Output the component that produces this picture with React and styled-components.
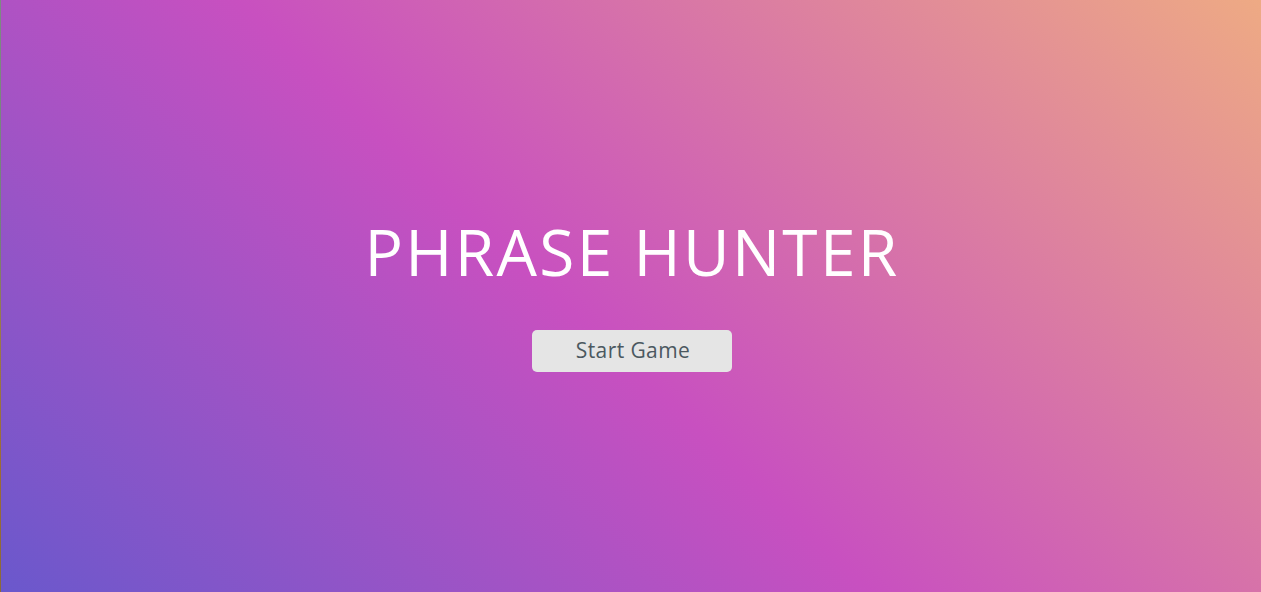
import React from "react";
import styled, { createGlobalStyle } from "styled-components";

const GlobalStyle = createGlobalStyle`
  html, body {
    margin: 0;
    padding: 0;
    height: 100%;
  }
  body {
    font-family: "Open Sans", "Liberation Sans", sans-serif;
  }
`;

const Screen = styled.main`
  box-sizing: border-box;
  height: 100vh;
  width: 100%;
  padding-left: 2px;
  display: flex;
  flex-direction: column;
  align-items: center;
  justify-content: center;
  gap: 46px;
  background: linear-gradient(43deg, #6a58cc 0%, #c850c0 46%, #eeaa84 100%);
  border-left: 1px solid;
  border-image: linear-gradient(to bottom, #7d8a84 0%, #74807c 40%, #9a7a4a 55%, #9c6a36 80%, #8a6a3a 100%) 1;
`;

const Title = styled.h1`
  margin: 0;
  font-family: "Open Sans", "Liberation Sans", sans-serif;
  font-weight: 400;
  font-size: 64px;
  line-height: 1;
  color: #ffffff;
  letter-spacing: 2.3px;
`;

const StartButton = styled.button`
  width: 200px;
  height: 42px;
  border: none;
  border-radius: 5px;
  background: #e5e5e5;
  color: #4b5860;
  font-family: "Open Sans", "Liberation Sans", sans-serif;
  font-size: 21px;
  letter-spacing: 0.4px;
  cursor: pointer;
  display: flex;
  align-items: center;
  justify-content: center;
  padding: 0 0 2px 2px;
`;

export default function App() {
  return (
    <>
      <GlobalStyle />
      <Screen>
        <Title>PHRASE HUNTER</Title>
        <StartButton>Start Game</StartButton>
      </Screen>
    </>
  );
}
